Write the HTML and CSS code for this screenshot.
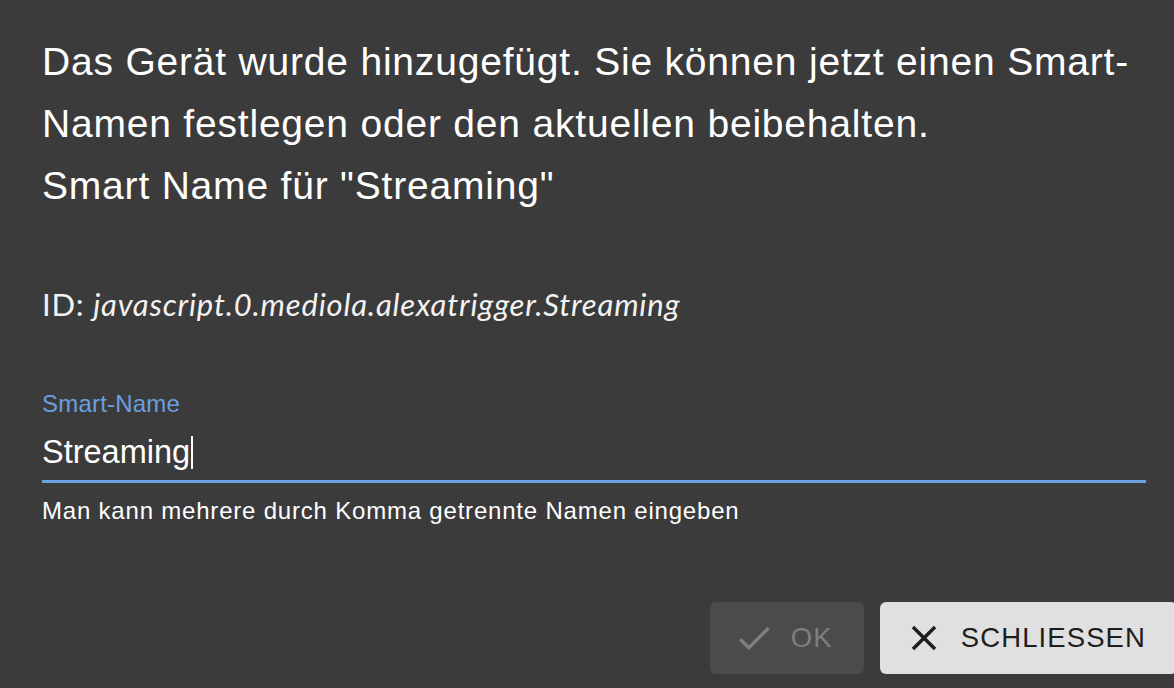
FILE: index.html
```html
<!DOCTYPE html>
<html lang="de">
<head>
    <meta charset="UTF-8">
    <title>Smart-Name</title>
    <link rel="stylesheet" href="styles.css">
</head>
<body>
    <div class="dialog">
        <div class="content">
            <h2 class="title">Das Gerät wurde hinzugefügt. Sie können jetzt einen Smart-Namen festlegen oder den aktuellen beibehalten.<br>Smart Name für "Streaming"</h2>

            <p class="object-id">ID: <i>javascript.0.mediola.alexatrigger.Streaming</i></p>

            <div class="field">
                <label class="field-label">Smart-Name</label>
                <div class="field-input">Streaming<span class="caret"></span></div>
                <p class="field-helper">Man kann mehrere durch Komma getrennte Namen eingeben</p>
            </div>
        </div>

        <div class="actions">
            <button class="btn btn-ok" disabled>
                <svg viewBox="0 0 24 24"><path d="M9 16.17L4.83 12l-1.42 1.41L9 19 21 7l-1.41-1.41z"/></svg>
                OK
            </button>
            <button class="btn btn-close">
                <svg viewBox="0 0 24 24"><path d="M19 6.41L17.59 5 12 10.59 6.41 5 5 6.41 10.59 12 5 17.59 6.41 19 12 13.41 17.59 19 19 17.59 13.41 12z"/></svg>
                SCHLIESSEN
            </button>
        </div>
    </div>
</body>
</html>
```

FILE: styles.css
```css
body, html {
    margin: 0;
    height: 100%;
    background-color: #3b3b3b;
    font-family: "Liberation Sans", Arial, sans-serif;
    color: #fff;
    overflow: hidden;
}
.dialog {
    height: 100%;
    display: flex;
    flex-direction: column;
}
.content {
    padding: 31px 28px 0 42px;
    flex: 1;
}
.title {
    margin: 0;
    font-size: 39px;
    font-weight: normal;
    line-height: 62px;
    letter-spacing: 0.8px;
}
.object-id {
    margin: 67px 0 0 0;
    font-family: Lato, "Open Sans", sans-serif;
    font-size: 31px;
    letter-spacing: 0.8px;
    line-height: 40px;
    color: #f2f2f2;
}
.field {
    margin-top: 66px;
}
.field-label {
    display: block;
    font-size: 24px;
    letter-spacing: 0.2px;
    color: #6c9fe0;
    line-height: 28px;
}
.field-input {
    font-size: 32.5px;
    line-height: 40px;
    padding: 14px 0 8px 0;
    border-bottom: 3px solid #6e9fe0;
}
.caret {
    display: inline-block;
    width: 2px;
    height: 33px;
    background-color: #fff;
    vertical-align: -6px;
    margin-left: 1px;
}
.field-helper {
    margin: 13px 0 0 0;
    font-size: 24px;
    letter-spacing: 0.8px;
    line-height: 30px;
}
.actions {
    display: flex;
    justify-content: flex-end;
    gap: 16px;
    padding-bottom: 14px;
    margin-right: -3px;
}
.btn {
    display: flex;
    align-items: center;
    height: 72px;
    padding: 0 31px 0 23px;
    border: none;
    border-radius: 6px;
    font-family: "Liberation Sans", Arial, sans-serif;
    font-size: 27.5px;
    letter-spacing: 1.1px;
}
.btn svg {
    width: 42px;
    height: 42px;
    margin-right: 16px;
    fill: currentColor;
}
.btn-ok {
    background-color: #4b4b4b;
    color: #7e7e7e;
}
.btn-close {
    background-color: #e0e0e0;
    color: #1e1e1e;
    cursor: pointer;
}
```
